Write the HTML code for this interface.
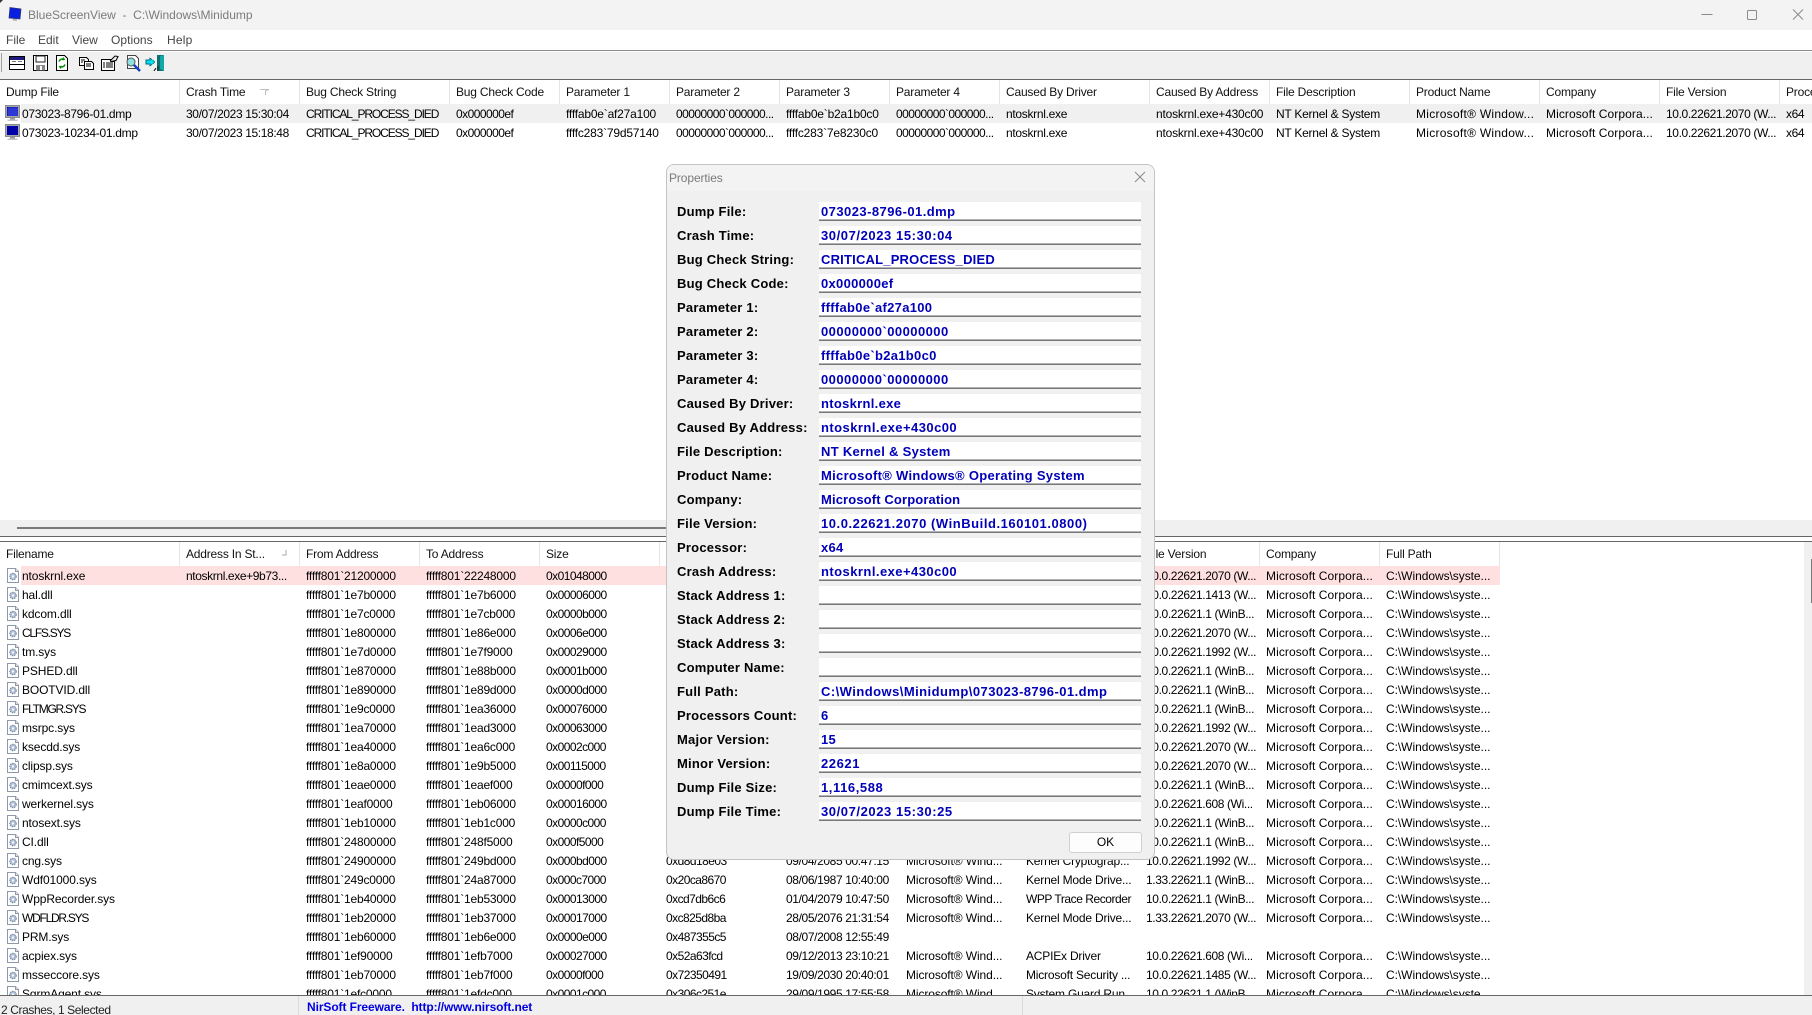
<!DOCTYPE html>
<html><head><meta charset="utf-8"><title>BlueScreenView</title>
<style>
html,body{margin:0;padding:0;background:#fff}
#w{position:relative;width:1812px;height:1015px;overflow:hidden;background:#fff;font:12px/19px "Liberation Sans",sans-serif;color:#000}
.a{position:absolute}
.r{position:absolute;left:0;height:19px;width:1812px;white-space:nowrap}
.r span{position:absolute;top:1px;letter-spacing:-.38px}
.h span{color:#111;letter-spacing:-.2px}
.s{position:absolute;width:1px;background:#e5e5e5;height:24px}
.fx{letter-spacing:-.2px!important}
.cap{letter-spacing:-1.1px!important}
.hx{letter-spacing:-.55px!important}
.nm{letter-spacing:-.3px!important}
#lo .n{letter-spacing:-.12px!important}
#lo .n.nc{letter-spacing:-1.25px!important}
.r:not(.h) .t10{letter-spacing:-.2px}
.r:not(.h) .t11{letter-spacing:-.25px}
.r:not(.h) .t12{letter-spacing:.27px}
.r:not(.h) .t13,.r:not(.h) .b11{letter-spacing:.08px}
.r:not(.h) .b12{letter-spacing:-.05px}
.r:not(.h) .b8{letter-spacing:-.1px}
.r:not(.h) .b9{letter-spacing:-.2px}
.t1{left:6px}.t2{left:186px}.t3{left:306px}.t4{left:456px}.t5{left:566px}.t6{left:676px}.t7{left:786px}.t8{left:896px}.t9{left:1006px}.t10{left:1156px}.t11{left:1276px}.t12{left:1416px}.t13{left:1546px}.t14{left:1666px}.t15{left:1786px}
.n{left:22px}.b2{left:186px}.b3{left:306px}.b4{left:426px}.b5{left:546px}.b6{left:666px}.b7{left:786px}.b8{left:906px}.b9{left:1026px}.b10{left:1146px}.b11{left:1266px}.b12{left:1386px}
.ic{position:absolute;left:6px;top:1px;width:14px;height:17px}
#d{position:absolute;left:666px;top:164px;width:489px;height:696px;background:#f0f0f0;border:1px solid #c4c4c4;border-radius:8px;box-sizing:border-box;overflow:hidden;z-index:5}
#d .tb{position:absolute;left:0;top:0;right:0;height:26px;background:#f3f3f3}
#d .l{position:absolute;left:10px;font:bold 13px/19px "Liberation Sans",sans-serif;letter-spacing:.22px;color:#000;white-space:nowrap}
#d .f{position:absolute;left:152px;width:322px;height:19px;box-sizing:border-box;background:#fff;border-bottom:1px solid #777;box-shadow:inset 0 -1px #b4b4b4;font:bold 13px/20px "Liberation Sans",sans-serif;letter-spacing:.3px;color:#0000b8;padding-left:2px;white-space:nowrap}
#d .f.dg{letter-spacing:.58px}
#d .f.v{letter-spacing:.55px}
#d .f.p{letter-spacing:.45px}
#d .f.c{letter-spacing:.2px}
#d .f.m{letter-spacing:.13px}
</style></head><body>
<div id="w">
<svg width="0" height="0" style="position:absolute"><defs>
<symbol id="fi" viewBox="0 0 14 17"><path d="M1.500 1.500h8l3 3v11h-11z" fill="#fff" stroke="#8d99a8"/><path d="M9.500 1.500v3h3" fill="#e8e8e8" stroke="#8d99a8"/><circle cx="7" cy="9.500" r="3.200" fill="#b4c2d8" stroke="#6d8099" stroke-dasharray="1.500 .8"/><circle cx="7" cy="9.500" r="1.100" fill="#fff"/></symbol>
<symbol id="mon" viewBox="0 0 15 17"><rect x=".5" y=".5" width="14" height="12" fill="#a8a8a8" stroke="#8a8a8a"/><rect x="2" y="2" width="11" height="9" fill="#0000a8"/><rect x="5" y="13" width="5" height="1.500" fill="#9a9a9a"/><rect x="2.500" y="14.500" width="10" height="1.500" fill="#c4c4c4"/></symbol>
</defs></svg>

<!-- title bar -->
<div class="a" style="left:0;top:0;width:1812px;height:30px;background:#f3f3f3"></div>
<div class="a" style="left:0;top:0;width:0;height:0;border-top:3px solid #333;border-right:3px solid transparent"></div>
<svg class="a" style="left:7px;top:6px" width="16" height="16" viewBox="0 0 16 16"><path d="M3 1.500l11 1.500-1 10-11-1z" fill="#0a1ee0" stroke="#303a70" stroke-width=".8"/><path d="M6 13l4 .5-.2 1.300-4-.5z" fill="#999"/></svg>
<div class="a" style="left:28px;top:5px;line-height:20px;color:#7b7b7b;letter-spacing:0;white-space:pre">BlueScreenView  -  C:\Windows\Minidump</div>
<svg class="a" style="left:1695px;top:6px" width="115" height="18" fill="none" stroke="#8a8a8a"><path d="M6.500 8.500h11"/><rect x="52.500" y="4.500" width="9" height="9" rx="1"/><path d="M98 3.500l10 10M108 3.500l-10 10"/></svg>

<!-- menu -->
<div class="a" style="left:0;top:30px;width:1812px;height:21px;background:#fff"></div>
<div class="a" style="left:6px;top:30px;line-height:20px;color:#444">File</div>
<div class="a" style="left:38px;top:30px;line-height:20px;color:#444">Edit</div>
<div class="a" style="left:72px;top:30px;line-height:20px;color:#444">View</div>
<div class="a" style="left:111px;top:30px;line-height:20px;color:#444;letter-spacing:.05px">Options</div>
<div class="a" style="left:167px;top:30px;line-height:20px;color:#444;letter-spacing:.2px">Help</div>
<div class="a" style="left:0;top:50px;width:1812px;height:1px;background:#8c8c8c"></div>

<!-- toolbar -->
<div class="a" style="left:0;top:52px;width:1812px;height:27px;background:#f0f0f0"></div>
<div class="a" style="left:1px;top:53px;width:1px;height:19px;background:#a0a0a0"></div>
<svg class="a" style="left:8px;top:53px" width="165" height="20" viewBox="0 0 165 20" shape-rendering="crispEdges">
<rect x="1.500" y="3.500" width="15" height="13" fill="#fff" stroke="#000"/><rect x="2" y="4" width="14" height="3" fill="#1a1a80"/><path d="M4 8.500h4M10 8.500h4" stroke="#777"/><rect x="2" y="11" width="14" height="1" fill="#000"/>
<path d="M25.500 2.500h14v15h-14z" fill="#fff" stroke="#000"/><rect x="28" y="3" width="9" height="6" fill="#fff" stroke="#222" stroke-width=".6"/><rect x="28" y="12" width="9" height="5.500" fill="#888"/><rect x="32" y="13" width="2" height="4" fill="#fff"/>
<path d="M48.500 2.500h8l3 3v12h-11z" fill="#fff" stroke="#000"/><path d="M51 8.500a3.500 3.500 0 0 1 5-2M57 11.500a3.500 3.500 0 0 1-5 2" fill="none" stroke="#009000" stroke-width="1.500" shape-rendering="auto"/><path d="M55 4l2.500 2.500-3 1zM53 16l-2.500-2.500 3-1z" fill="#009000" shape-rendering="auto"/>
<path d="M71.500 4.500h7l2 2v6h-9z" fill="#fff" stroke="#000"/><path d="M76.500 8.500h7l2 2v6h-9z" fill="#fff" stroke="#000"/><path d="M73 7h4M73 9h2M78 11h5M78 13h5" stroke="#000"/>
<path d="M93.500 6.500h9v2h4v9h-13z" fill="#fff" stroke="#000"/><path d="M95 10h2M98 10h7M95 12h2M98 12h7M95 14h2M98 14h7" stroke="#000"/><path d="M102 8l5-5 3 .5-2 4-5 1" fill="#eee" stroke="#000" shape-rendering="auto"/>
<path d="M119.500 2.500h8l3 3v10h-11z" fill="#fff" stroke="#444"/><circle cx="123" cy="9" r="4" fill="#8fe0e0" stroke="#555" shape-rendering="auto"/><path d="M126 12l6 6" stroke="#1040c0" stroke-width="2.500" shape-rendering="auto"/>
<rect x="149" y="2" width="7" height="16" fill="#0d6f70"/><path d="M152 3l4-1v16l-4-2z" fill="#12a8a8"/><path d="M142 7v-2l5 4-5 4v-2h-4v-4z" fill="#00e0f0" stroke="#006a80" stroke-width=".6"/><path d="M148 15l-2 3M150 13v5" stroke="#222"/>
</svg>
<div class="a" style="left:0;top:79px;width:1812px;height:1px;background:#666"></div>

<!-- upper header -->
<div class="r h" style="top:82px">
<span class="t1">Dump File</span><span class="t2">Crash Time</span><span class="t3">Bug Check String</span><span class="t4">Bug Check Code</span><span class="t5">Parameter 1</span><span class="t6">Parameter 2</span><span class="t7">Parameter 3</span><span class="t8">Parameter 4</span><span class="t9">Caused By Driver</span><span class="t10">Caused By Address</span><span class="t11">File Description</span><span class="t12">Product Name</span><span class="t13">Company</span><span class="t14">File Version</span><span class="t15">Processor</span>
</div>
<i class="s" style="left:179px;top:80px"></i><i class="s" style="left:299px;top:80px"></i><i class="s" style="left:449px;top:80px"></i><i class="s" style="left:559px;top:80px"></i><i class="s" style="left:669px;top:80px"></i><i class="s" style="left:779px;top:80px"></i><i class="s" style="left:889px;top:80px"></i><i class="s" style="left:999px;top:80px"></i><i class="s" style="left:1149px;top:80px"></i><i class="s" style="left:1269px;top:80px"></i><i class="s" style="left:1409px;top:80px"></i><i class="s" style="left:1539px;top:80px"></i><i class="s" style="left:1659px;top:80px"></i><i class="s" style="left:1779px;top:80px"></i>
<svg class="a" style="left:259px;top:88px" width="12" height="8" fill="none" stroke="#c0c0c0"><path d="M1 1.500h9L6.500 3v4"/></svg>

<!-- upper rows -->
<div class="a" style="left:21px;top:104px;width:1791px;height:19px;background:#f0f0f0"></div>
<div class="r" style="top:104px"><svg class="ic" viewBox="0 0 15 17" style="left:5px;width:15px"><rect x=".5" y=".5" width="14" height="12" fill="#a8a8a8" stroke="#8a8a8a"/><rect x="2" y="2" width="11" height="9" fill="#0000a8"/><path d="M2 4h11M2 6h11M2 8h11M2 10h11M4 2v9M6 2v9M8 2v9M10 2v9M12 2v9" stroke="#5a78ff" stroke-width=".6"/><rect x="5" y="13" width="5" height="1.500" fill="#9a9a9a"/><rect x="2.500" y="14.500" width="10" height="1.500" fill="#c4c4c4"/></svg>
<span class="n nm">073023-8796-01.dmp</span><span class="t2">30/07/2023 15:30:04</span><span class="t3 cap">CRITICAL_PROCESS_DIED</span><span class="t4 hx">0x000000ef</span><span class="t5 fx">ffffab0e`af27a100</span><span class="t6 hx">00000000`000000...</span><span class="t7 fx">ffffab0e`b2a1b0c0</span><span class="t8 hx">00000000`000000...</span><span class="t9 nm">ntoskrnl.exe</span><span class="t10">ntoskrnl.exe+430c00</span><span class="t11">NT Kernel &amp; System</span><span class="t12">Microsoft® Window...</span><span class="t13">Microsoft Corpora...</span><span class="t14">10.0.22621.2070 (W...</span><span class="t15">x64</span></div>
<div class="r" style="top:123px"><svg class="ic" style="left:5px;width:15px"><use href="#mon"/></svg>
<span class="n nm">073023-10234-01.dmp</span><span class="t2">30/07/2023 15:18:48</span><span class="t3 cap">CRITICAL_PROCESS_DIED</span><span class="t4 hx">0x000000ef</span><span class="t5 fx">ffffc283`79d57140</span><span class="t6 hx">00000000`000000...</span><span class="t7 fx">ffffc283`7e8230c0</span><span class="t8 hx">00000000`000000...</span><span class="t9 nm">ntoskrnl.exe</span><span class="t10">ntoskrnl.exe+430c00</span><span class="t11">NT Kernel &amp; System</span><span class="t12">Microsoft® Window...</span><span class="t13">Microsoft Corpora...</span><span class="t14">10.0.22621.2070 (W...</span><span class="t15">x64</span></div>

<!-- splitter -->
<div class="a" style="left:0;top:520px;width:1812px;height:16px;background:#f0f0f0"></div>
<div class="a" style="left:17px;top:527px;width:680px;height:2px;background:#7a7a7a"></div>
<div class="a" style="left:0;top:536px;width:1812px;height:1px;background:#666"></div>
<div class="a" style="left:0;top:541px;width:1812px;height:1px;background:#666"></div>

<!-- right scrollbar -->
<div class="a" style="left:1804px;top:542px;width:8px;height:453px;background:#f0f0f0"></div>
<div class="a" style="left:1811px;top:559px;width:1px;height:44px;background:#7a7a7a"></div>

<!-- lower header -->
<div class="r h" style="top:544px">
<span class="t1">Filename</span><span class="b2">Address In St...</span><span class="b3">From Address</span><span class="b4">To Address</span><span class="b5">Size</span><span class="b6">Time Stamp</span><span class="b7">Time String</span><span class="b8">Product Name</span><span class="b9">File Description</span><span class="b10">File Version</span><span class="b11">Company</span><span class="b12">Full Path</span>
</div>
<i class="s" style="left:179px;top:542px"></i><i class="s" style="left:299px;top:542px"></i><i class="s" style="left:419px;top:542px"></i><i class="s" style="left:539px;top:542px"></i><i class="s" style="left:659px;top:542px"></i><i class="s" style="left:1259px;top:542px"></i><i class="s" style="left:1379px;top:542px"></i><i class="s" style="left:1499px;top:542px"></i>
<svg class="a" style="left:280px;top:549px" width="8" height="8" fill="none" stroke="#aaa"><path d="M6 1v5H2"/></svg>

<!-- lower rows -->
<div class="a" style="left:21px;top:566px;width:1479px;height:19px;background:#ffe0e0"></div>
<div id="lo" class="a" style="left:0;top:566px;width:1812px;height:429px;overflow:hidden">
<div class="r" style="top:0"><svg class="ic"><use href="#fi"/></svg><span class="n nm">ntoskrnl.exe</span><span class="b2">ntoskrnl.exe+9b73...</span><span class="b3 fx">fffff801`21200000</span><span class="b4 fx">fffff801`22248000</span><span class="b5 hx">0x01048000</span><span class="b10">10.0.22621.2070 (W...</span><span class="b11">Microsoft Corpora...</span><span class="b12">C:\Windows\syste...</span></div>
<div class="r" style="top:19px"><svg class="ic"><use href="#fi"/></svg><span class="n nm">hal.dll</span><span class="b3 fx">fffff801`1e7b0000</span><span class="b4 fx">fffff801`1e7b6000</span><span class="b5 hx">0x00006000</span><span class="b10">10.0.22621.1413 (W...</span><span class="b11">Microsoft Corpora...</span><span class="b12">C:\Windows\syste...</span></div>
<div class="r" style="top:38px"><svg class="ic"><use href="#fi"/></svg><span class="n nm">kdcom.dll</span><span class="b3 fx">fffff801`1e7c0000</span><span class="b4 fx">fffff801`1e7cb000</span><span class="b5 hx">0x0000b000</span><span class="b10">10.0.22621.1 (WinB...</span><span class="b11">Microsoft Corpora...</span><span class="b12">C:\Windows\syste...</span></div>
<div class="r" style="top:57px"><svg class="ic"><use href="#fi"/></svg><span class="n nm nc">CLFS.SYS</span><span class="b3 fx">fffff801`1e800000</span><span class="b4 fx">fffff801`1e86e000</span><span class="b5 hx">0x0006e000</span><span class="b10">10.0.22621.2070 (W...</span><span class="b11">Microsoft Corpora...</span><span class="b12">C:\Windows\syste...</span></div>
<div class="r" style="top:76px"><svg class="ic"><use href="#fi"/></svg><span class="n nm">tm.sys</span><span class="b3 fx">fffff801`1e7d0000</span><span class="b4 fx">fffff801`1e7f9000</span><span class="b5 hx">0x00029000</span><span class="b10">10.0.22621.1992 (W...</span><span class="b11">Microsoft Corpora...</span><span class="b12">C:\Windows\syste...</span></div>
<div class="r" style="top:95px"><svg class="ic"><use href="#fi"/></svg><span class="n nm" style="letter-spacing:-.3px">PSHED.dll</span><span class="b3 fx">fffff801`1e870000</span><span class="b4 fx">fffff801`1e88b000</span><span class="b5 hx">0x0001b000</span><span class="b10">10.0.22621.1 (WinB...</span><span class="b11">Microsoft Corpora...</span><span class="b12">C:\Windows\syste...</span></div>
<div class="r" style="top:114px"><svg class="ic"><use href="#fi"/></svg><span class="n nm">BOOTVID.dll</span><span class="b3 fx">fffff801`1e890000</span><span class="b4 fx">fffff801`1e89d000</span><span class="b5 hx">0x0000d000</span><span class="b10">10.0.22621.1 (WinB...</span><span class="b11">Microsoft Corpora...</span><span class="b12">C:\Windows\syste...</span></div>
<div class="r" style="top:133px"><svg class="ic"><use href="#fi"/></svg><span class="n nm nc">FLTMGR.SYS</span><span class="b3 fx">fffff801`1e9c0000</span><span class="b4 fx">fffff801`1ea36000</span><span class="b5 hx">0x00076000</span><span class="b10">10.0.22621.1 (WinB...</span><span class="b11">Microsoft Corpora...</span><span class="b12">C:\Windows\syste...</span></div>
<div class="r" style="top:152px"><svg class="ic"><use href="#fi"/></svg><span class="n nm">msrpc.sys</span><span class="b3 fx">fffff801`1ea70000</span><span class="b4 fx">fffff801`1ead3000</span><span class="b5 hx">0x00063000</span><span class="b10">10.0.22621.1992 (W...</span><span class="b11">Microsoft Corpora...</span><span class="b12">C:\Windows\syste...</span></div>
<div class="r" style="top:171px"><svg class="ic"><use href="#fi"/></svg><span class="n nm">ksecdd.sys</span><span class="b3 fx">fffff801`1ea40000</span><span class="b4 fx">fffff801`1ea6c000</span><span class="b5 hx">0x0002c000</span><span class="b10">10.0.22621.2070 (W...</span><span class="b11">Microsoft Corpora...</span><span class="b12">C:\Windows\syste...</span></div>
<div class="r" style="top:190px"><svg class="ic"><use href="#fi"/></svg><span class="n nm">clipsp.sys</span><span class="b3 fx">fffff801`1e8a0000</span><span class="b4 fx">fffff801`1e9b5000</span><span class="b5 hx">0x00115000</span><span class="b10">10.0.22621.2070 (W...</span><span class="b11">Microsoft Corpora...</span><span class="b12">C:\Windows\syste...</span></div>
<div class="r" style="top:209px"><svg class="ic"><use href="#fi"/></svg><span class="n nm">cmimcext.sys</span><span class="b3 fx">fffff801`1eae0000</span><span class="b4 fx">fffff801`1eaef000</span><span class="b5 hx">0x0000f000</span><span class="b10">10.0.22621.1 (WinB...</span><span class="b11">Microsoft Corpora...</span><span class="b12">C:\Windows\syste...</span></div>
<div class="r" style="top:228px"><svg class="ic"><use href="#fi"/></svg><span class="n nm">werkernel.sys</span><span class="b3 fx">fffff801`1eaf0000</span><span class="b4 fx">fffff801`1eb06000</span><span class="b5 hx">0x00016000</span><span class="b10">10.0.22621.608 (Wi...</span><span class="b11">Microsoft Corpora...</span><span class="b12">C:\Windows\syste...</span></div>
<div class="r" style="top:247px"><svg class="ic"><use href="#fi"/></svg><span class="n nm">ntosext.sys</span><span class="b3 fx">fffff801`1eb10000</span><span class="b4 fx">fffff801`1eb1c000</span><span class="b5 hx">0x0000c000</span><span class="b10">10.0.22621.1 (WinB...</span><span class="b11">Microsoft Corpora...</span><span class="b12">C:\Windows\syste...</span></div>
<div class="r" style="top:266px"><svg class="ic"><use href="#fi"/></svg><span class="n nm">CI.dll</span><span class="b3 fx">fffff801`24800000</span><span class="b4 fx">fffff801`248f5000</span><span class="b5 hx">0x000f5000</span><span class="b10">10.0.22621.1 (WinB...</span><span class="b11">Microsoft Corpora...</span><span class="b12">C:\Windows\syste...</span></div>
<div class="r" style="top:285px"><svg class="ic"><use href="#fi"/></svg><span class="n nm">cng.sys</span><span class="b3 fx">fffff801`24900000</span><span class="b4 fx">fffff801`249bd000</span><span class="b5 hx">0x000bd000</span><span class="b6 hx">0xd8d18e03</span><span class="b7">09/04/2085 00:47:15</span><span class="b8">Microsoft® Wind...</span><span class="b9">Kernel Cryptograp...</span><span class="b10">10.0.22621.1992 (W...</span><span class="b11">Microsoft Corpora...</span><span class="b12">C:\Windows\syste...</span></div>
<div class="r" style="top:304px"><svg class="ic"><use href="#fi"/></svg><span class="n nm">Wdf01000.sys</span><span class="b3 fx">fffff801`249c0000</span><span class="b4 fx">fffff801`24a87000</span><span class="b5 hx">0x000c7000</span><span class="b6 hx">0x20ca8670</span><span class="b7">08/06/1987 10:40:00</span><span class="b8">Microsoft® Wind...</span><span class="b9">Kernel Mode Drive...</span><span class="b10">1.33.22621.1 (WinB...</span><span class="b11">Microsoft Corpora...</span><span class="b12">C:\Windows\syste...</span></div>
<div class="r" style="top:323px"><svg class="ic"><use href="#fi"/></svg><span class="n nm">WppRecorder.sys</span><span class="b3 fx">fffff801`1eb40000</span><span class="b4 fx">fffff801`1eb53000</span><span class="b5 hx">0x00013000</span><span class="b6 hx">0xcd7db6c6</span><span class="b7">01/04/2079 10:47:50</span><span class="b8">Microsoft® Wind...</span><span class="b9" style="letter-spacing:-.45px">WPP Trace Recorder</span><span class="b10">10.0.22621.1 (WinB...</span><span class="b11">Microsoft Corpora...</span><span class="b12">C:\Windows\syste...</span></div>
<div class="r" style="top:342px"><svg class="ic"><use href="#fi"/></svg><span class="n nm nc">WDFLDR.SYS</span><span class="b3 fx">fffff801`1eb20000</span><span class="b4 fx">fffff801`1eb37000</span><span class="b5 hx">0x00017000</span><span class="b6 hx">0xc825d8ba</span><span class="b7">28/05/2076 21:31:54</span><span class="b8">Microsoft® Wind...</span><span class="b9">Kernel Mode Drive...</span><span class="b10">1.33.22621.2070 (W...</span><span class="b11">Microsoft Corpora...</span><span class="b12">C:\Windows\syste...</span></div>
<div class="r" style="top:361px"><svg class="ic"><use href="#fi"/></svg><span class="n nm">PRM.sys</span><span class="b3 fx">fffff801`1eb60000</span><span class="b4 fx">fffff801`1eb6e000</span><span class="b5 hx">0x0000e000</span><span class="b6 hx">0x487355c5</span><span class="b7">08/07/2008 12:55:49</span></div>
<div class="r" style="top:380px"><svg class="ic"><use href="#fi"/></svg><span class="n nm">acpiex.sys</span><span class="b3 fx">fffff801`1ef90000</span><span class="b4 fx">fffff801`1efb7000</span><span class="b5 hx">0x00027000</span><span class="b6 hx">0x52a63fcd</span><span class="b7">09/12/2013 23:10:21</span><span class="b8">Microsoft® Wind...</span><span class="b9">ACPIEx Driver</span><span class="b10">10.0.22621.608 (Wi...</span><span class="b11">Microsoft Corpora...</span><span class="b12">C:\Windows\syste...</span></div>
<div class="r" style="top:399px"><svg class="ic"><use href="#fi"/></svg><span class="n nm">msseccore.sys</span><span class="b3 fx">fffff801`1eb70000</span><span class="b4 fx">fffff801`1eb7f000</span><span class="b5 hx">0x0000f000</span><span class="b6 hx">0x72350491</span><span class="b7">19/09/2030 20:40:01</span><span class="b8">Microsoft® Wind...</span><span class="b9">Microsoft Security ...</span><span class="b10">10.0.22621.1485 (W...</span><span class="b11">Microsoft Corpora...</span><span class="b12">C:\Windows\syste...</span></div>
<div class="r" style="top:418px"><svg class="ic"><use href="#fi"/></svg><span class="n nm">SgrmAgent.sys</span><span class="b3 fx">fffff801`1efc0000</span><span class="b4 fx">fffff801`1efdc000</span><span class="b5 hx">0x0001c000</span><span class="b6 hx">0x306c251e</span><span class="b7">29/09/1995 17:55:58</span><span class="b8">Microsoft® Wind...</span><span class="b9">System Guard Run...</span><span class="b10">10.0.22621.1 (WinB...</span><span class="b11">Microsoft Corpora...</span><span class="b12">C:\Windows\syste...</span></div>
</div>

<!-- status bar -->
<div class="a" style="left:0;top:995px;width:1812px;height:1px;background:#666"></div>
<div class="a" style="left:0;top:996px;width:1812px;height:19px;background:#f0f0f0"></div>
<div class="a" style="left:1px;top:1001px;color:#222;letter-spacing:-.4px">2 Crashes, 1 Selected</div>
<div class="a" style="left:298px;top:996px;width:1px;height:19px;background:#dcdcdc"></div>
<div class="a" style="left:1022px;top:996px;width:1px;height:19px;background:#dcdcdc"></div>
<div class="a" style="left:307px;top:998px;font-weight:bold;color:#0000e0;white-space:pre;letter-spacing:-.09px">NirSoft Freeware.  http://www.nirsoft.net</div>

<!-- dialog -->
<div id="d">
<div class="tb"></div>
<div class="a" style="left:2px;top:3px;line-height:20px;color:#7b7b7b;letter-spacing:-.1px">Properties</div>
<svg class="a" style="left:467px;top:6px" width="12" height="12" fill="none" stroke="#8a8a8a"><path d="M1 1l10 10M11 1L1 11"/></svg>
<div class="l" style="top:37px">Dump File:</div><div class="f p" style="top:37px">073023-8796-01.dmp</div>
<div class="l" style="top:61px">Crash Time:</div><div class="f dg" style="top:61px">30/07/2023 15:30:04</div>
<div class="l" style="top:85px">Bug Check String:</div><div class="f c" style="top:85px">CRITICAL_PROCESS_DIED</div>
<div class="l" style="top:109px">Bug Check Code:</div><div class="f" style="top:109px">0x000000ef</div>
<div class="l" style="top:133px">Parameter 1:</div><div class="f" style="top:133px">ffffab0e`af27a100</div>
<div class="l" style="top:157px">Parameter 2:</div><div class="f p" style="top:157px">00000000`00000000</div>
<div class="l" style="top:181px">Parameter 3:</div><div class="f" style="top:181px">ffffab0e`b2a1b0c0</div>
<div class="l" style="top:205px">Parameter 4:</div><div class="f p" style="top:205px">00000000`00000000</div>
<div class="l" style="top:229px">Caused By Driver:</div><div class="f" style="top:229px">ntoskrnl.exe</div>
<div class="l" style="top:253px">Caused By Address:</div><div class="f p" style="top:253px">ntoskrnl.exe+430c00</div>
<div class="l" style="top:277px">File Description:</div><div class="f" style="top:277px">NT Kernel &amp; System</div>
<div class="l" style="top:301px">Product Name:</div><div class="f" style="top:301px">Microsoft® Windows® Operating System</div>
<div class="l" style="top:325px">Company:</div><div class="f m" style="top:325px">Microsoft Corporation</div>
<div class="l" style="top:349px">File Version:</div><div class="f v" style="top:349px">10.0.22621.2070 (WinBuild.160101.0800)</div>
<div class="l" style="top:373px">Processor:</div><div class="f" style="top:373px">x64</div>
<div class="l" style="top:397px">Crash Address:</div><div class="f p" style="top:397px">ntoskrnl.exe+430c00</div>
<div class="l" style="top:421px">Stack Address 1:</div><div class="f" style="top:421px"></div>
<div class="l" style="top:445px">Stack Address 2:</div><div class="f" style="top:445px"></div>
<div class="l" style="top:469px">Stack Address 3:</div><div class="f" style="top:469px"></div>
<div class="l" style="top:493px">Computer Name:</div><div class="f" style="top:493px"></div>
<div class="l" style="top:517px">Full Path:</div><div class="f p" style="top:517px">C:\Windows\Minidump\073023-8796-01.dmp</div>
<div class="l" style="top:541px">Processors Count:</div><div class="f" style="top:541px">6</div>
<div class="l" style="top:565px">Major Version:</div><div class="f" style="top:565px">15</div>
<div class="l" style="top:589px">Minor Version:</div><div class="f dg" style="top:589px">22621</div>
<div class="l" style="top:613px">Dump File Size:</div><div class="f dg" style="top:613px">1,116,588</div>
<div class="l" style="top:637px">Dump File Time:</div><div class="f dg" style="top:637px">30/07/2023 15:30:25</div>
<div class="a" style="left:402px;top:667px;width:73px;height:21px;box-sizing:border-box;background:#fdfdfd;border:1px solid #d0d0d0;border-radius:3px;text-align:center;line-height:19px">OK</div>
</div>
</div>
</body></html>
